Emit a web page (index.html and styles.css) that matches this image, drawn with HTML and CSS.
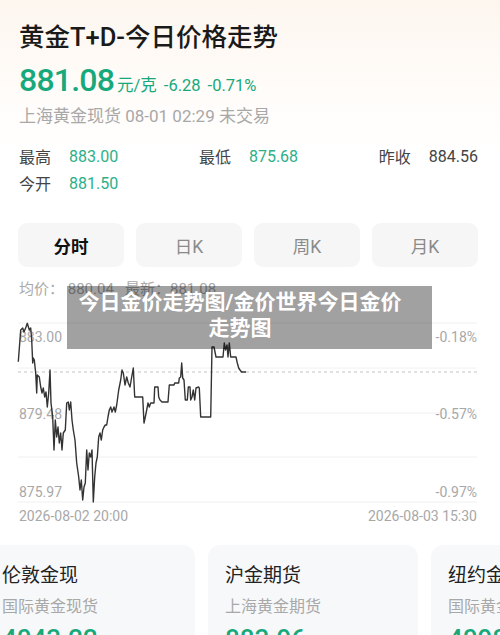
FILE: index.html
```html
<!DOCTYPE html>
<html lang="zh-CN">
<head>
<meta charset="utf-8">
<title>黄金T+D-今日价格走势</title>
<link rel="stylesheet" href="styles.css">
</head>
<body>
<div class="page">
  <section class="header">
    <h1 class="title">黄金T+D-今日价格走势</h1>
    <div class="price-row">
      <span class="price">881.08</span>
      <span class="unit">元/克</span>
      <span class="chg">-6.28</span>
      <span class="chg">-0.71%</span>
    </div>
    <div class="sub">上海黄金现货 08-01 02:29 未交易</div>
    <div class="stats">
      <div class="stat"><span class="lbl">最高</span><span class="val green">883.00</span></div>
      <div class="stat"><span class="lbl">最低</span><span class="val green">875.68</span></div>
      <div class="stat"><span class="lbl">昨收</span><span class="val">884.56</span></div>
      <div class="stat"><span class="lbl">今开</span><span class="val green">881.50</span></div>
    </div>
    <div class="tabs">
      <div class="tab active">分时</div>
      <div class="tab">日K</div>
      <div class="tab">周K</div>
      <div class="tab">月K</div>
    </div>
  </section>

  <section class="chart">
    <div class="chart-head">均价：&nbsp;880.04&nbsp;&nbsp;&nbsp;最新：881.08</div>
    <svg class="chart-svg" width="500" height="226" viewBox="0 0 500 226">
      <g class="grid">
        <line x1="18" y1="23" x2="477" y2="23"/>
        <line x1="18" y1="68" x2="477" y2="68"/>
        <line x1="18" y1="113" x2="477" y2="113"/>
        <line x1="18" y1="157" x2="477" y2="157"/>
        <line x1="18" y1="202" x2="477" y2="202"/>
      </g>
      <line class="dash" x1="18" y1="72" x2="477" y2="72"/>
      <g class="axis">
        <text x="19" y="42">883.00</text>
        <text x="19" y="119">879.48</text>
        <text x="19" y="197">875.97</text>
        <text x="477" y="42" text-anchor="end">-0.18%</text>
        <text x="477" y="119" text-anchor="end">-0.57%</text>
        <text x="477" y="197" text-anchor="end">-0.97%</text>
        <text x="19" y="221">2026-08-02 20:00</text>
        <text x="477" y="221" text-anchor="end">2026-08-03 15:30</text>
      </g>
      <polyline class="line" points="18.3,61.7 20.7,30 22.7,28 24,32 26,27 27.3,23.3 29.3,30 30.7,28 31.7,40 32.7,63 33.3,58 34.3,60 35.7,73 36.7,93 37.3,75 39.3,77 40.7,87 42,93 43.3,88 44.7,97 46,92 47.3,107 48.7,93 50,70 51,103 52.7,117 54,150 55.3,120 56.7,137 58,127 59.3,143 60.7,133 62,150 63.3,133 65.3,130 66.7,103 68.3,102 69.3,110 70.7,102 72,120 73.3,130 75,140 76.7,163 78.7,177 80,190 81.3,180 82.7,200 84,187 85.3,183 86.7,150 88,170 89.3,153 90.7,157 92,150 93.3,202 94.7,177 96,163 97.3,157 98.7,137 100,133 101.3,140 102.7,130 104,127 105.3,125 106.7,125 108,117 109.3,110 110.7,107 112,112 114,107 115.3,112 116.7,105 118.7,90 120.7,80 122,70 123.3,73 125,85 126.7,77 128.3,83 130,87 131.7,77 133.3,68 134.7,97 142.7,97 144,123 145.3,117 146.7,110 148,103 149.3,107 150.7,103 154,103 154.7,87 158,87 158.7,97 160,100 162,102 168,102 169.3,85 174,85 174.7,83 178.7,83 179.3,78 180.7,77 181.7,63 182.7,78 184,80 185.3,100 187.3,100 188.3,87 190,87 190.7,100 192,97 193.3,90 194.7,100 196,88 198.7,87 199.3,88 200.7,117 210.7,117 212,47 214,47 216,57 223,57 224.3,43 225.5,50 227,45 228,57 229.3,43 230.7,57 236,57 237.3,63 238.7,68 240,70 241.7,72 246,72"/>
    </svg>
  </section>

  <section class="cards">
    <div class="card">
      <div class="card-title">伦敦金现</div>
      <div class="card-sub">国际黄金现货</div>
      <div class="card-val"><span class="big">4043.22</span><span class="small">-1.53%</span></div>
    </div>
    <div class="card">
      <div class="card-title">沪金期货</div>
      <div class="card-sub">上海黄金期货</div>
      <div class="card-val"><span class="big">883.96</span><span class="small">-0.08%</span></div>
    </div>
    <div class="card">
      <div class="card-title">纽约金价</div>
      <div class="card-sub">国际黄金期货</div>
      <div class="card-val"><span class="big">4098.50</span><span class="small">-1.42%</span></div>
    </div>
  </section>

  <div class="overlay">今日金价走势图/金价世界今日金价<br>走势图</div>
</div>
</body>
</html>
```

FILE: styles.css
```css
* { box-sizing: border-box; }
html, body { margin: 0; padding: 0; }
body {
  background: #fff;
  font-family: Roboto, "Noto Sans CJK SC", sans-serif;
  color: #222;
  overflow: hidden;
}
.page {
  position: relative;
  width: 500px;
  min-height: 635px;
  background: linear-gradient(180deg, #fdf6ef 0px, #fffdfb 110px, #ffffff 160px);
}
.header {
  padding: 21px 22px 0 18px;
}
.title {
  margin: 0;
  font-size: 25.5px;
  line-height: 32px;
  font-weight: 500;
  color: #1a1a1a;
  padding-left: 1px;
}
.price-row {
  margin-top: 7px;
  display: flex;
  align-items: baseline;
  height: 40px;
  padding-left: 1px;
  color: #17a97b;
}
.price {
  font-size: 32px;
  line-height: 40px;
  font-weight: 500;
  letter-spacing: -0.8px;
}
.unit {
  font-size: 16.5px;
  margin-left: 3px;
}
.chg {
  font-size: 16.5px;
  margin-left: 7px;
}
.sub {
  margin-top: 4px;
  font-size: 17px;
  line-height: 24px;
  color: #a8a8a8;
  padding-left: 1px;
}
.stats {
  margin-top: 15px;
  display: grid;
  grid-template-columns: repeat(3, auto);
  justify-content: space-between;
  row-gap: 1px;
  padding-left: 1px;
}
.stat {
  display: flex;
  align-items: center;
  height: 26px;
  font-size: 16px;
}
.lbl { color: #444; width: 50px; }
.val { color: #444; }
.green { color: #2cb08a; }
.tabs {
  margin-top: 27px;
  display: flex;
  gap: 12px;
}
.tab {
  flex: 1;
  height: 44px;
  border-radius: 9px;
  background: #f6f6f6;
  display: flex;
  align-items: center;
  justify-content: center;
  font-size: 17.5px;
  color: #8a8a8a;
}
.tab.active {
  color: #111;
  font-weight: 700;
}
.chart {
  margin-top: 11px;
}
.chart-head {
  height: 22px;
  line-height: 22px;
  font-size: 15px;
  color: #aaa;
  padding-left: 19px;
}
.chart-svg { display: block; }
.grid line { stroke: #f0f0f0; stroke-width: 1; }
.dash { stroke: #c4c4c4; stroke-width: 1; stroke-dasharray: 3 3; }
.axis text {
  font-family: Roboto, "Noto Sans CJK SC", sans-serif;
  font-size: 14px;
  fill: #a8a8a8;
}
.line {
  fill: none;
  stroke: #333;
  stroke-width: 1.4;
  stroke-linejoin: round;
}
.cards {
  margin-top: 19px;
  margin-left: -15px;
  display: flex;
  gap: 13px;
}
.card {
  flex: 0 0 210px;
  height: 130px;
  border-radius: 12px;
  background: #f7f8fa;
  padding: 17px 17px 0 17px;
}
.card-title {
  font-size: 19px;
  line-height: 28px;
  color: #222;
}
.card-sub {
  margin-top: 6px;
  font-size: 16px;
  line-height: 22px;
  color: #a8a8a8;
}
.card-val {
  margin-top: 6px;
  color: #17a97b;
  display: flex;
  align-items: baseline;
  gap: 8px;
}
.card-val .big { font-size: 26px; font-weight: 500; }
.card-val .small { font-size: 15px; }
.overlay {
  position: absolute;
  left: 67px;
  top: 286px;
  width: 365px;
  height: 63px;
  background: rgba(0, 0, 0, 0.37);
  color: #fff;
  font-size: 21px;
  font-weight: 700;
  line-height: 26px;
  text-align: center;
  padding: 3px 19px 0 0;
}
```
